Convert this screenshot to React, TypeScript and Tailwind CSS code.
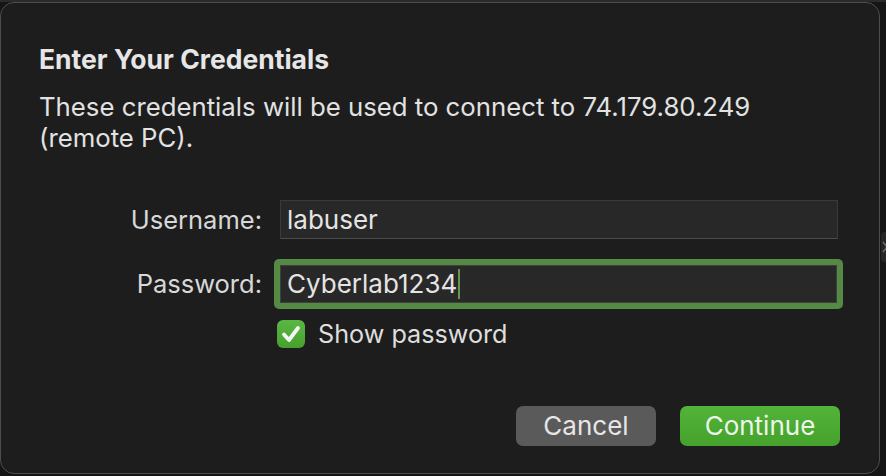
import React from "react";

const CheckIcon = () => (
  <svg viewBox="0 0 28 28" className="h-[28px] w-[28px]">
    <path
      d="M7 14.5 L12 20 L21 8"
      fill="none"
      stroke="#f4f4f4"
      strokeWidth="3.8"
      strokeLinecap="round"
      strokeLinejoin="round"
    />
  </svg>
);

const App = () => {
  return (
    <div className="relative h-[476px] w-[886px] overflow-hidden bg-[#151515] font-['Inter',sans-serif] text-[#dedede]">
      <div className="h-[2px] bg-[#2a2a2a]" />

      {/* edge of a control behind the sheet */}
      <div className="absolute left-[881px] top-[232px] flex h-[30px] w-[12px] items-center rounded-[4px] bg-[#262626]">
        <svg viewBox="0 0 6 12" className="ml-[1px] h-[12px] w-[6px]">
          <path d="M1 1 L5 6 L1 11" fill="none" stroke="#6a6a6a" strokeWidth="1.6" />
        </svg>
      </div>

      <div className="h-[472px] w-[880px] rounded-[14px] border border-[#4d4d4d] bg-[#1d1d1d] pt-[41px]">
        <h1 className="pl-[38px] text-[26.5px] font-bold leading-[30px] text-[#e6e6e6]">
          Enter Your Credentials
        </h1>
        <p className="mt-[17px] pl-[38px] text-[25.75px] leading-[31px] text-[#e2e2e2]">
          These credentials will be used to connect to 74.179.80.249
          <br />
          (remote PC).
        </p>

        <div className="mt-[47px] flex items-center">
          <label className="w-[261px] text-right text-[25.5px] leading-[32px] text-[#d8d8d8]">
            Username:
          </label>
          <div className="ml-[18px] flex h-[39px] w-[558px] items-center border border-[#3a3a3a] border-b-[#4a4a4a] bg-[#282828] pl-[6px] text-[26px] leading-[32px] text-[#e4e4e4]">
            labuser
          </div>
        </div>

        <div className="mt-[20px] flex items-center">
          <label className="w-[261px] text-right text-[25.5px] leading-[32px] text-[#d8d8d8]">
            Password:
          </label>
          <div className="ml-[12px] rounded-[5px] bg-[#558a45] p-[6px]">
            <div className="flex h-[38px] w-[557px] items-center border border-[#3f3f3f] bg-[#282828] pl-[6px] text-[26px] leading-[32px] text-[#e4e4e4]">
              Cyberlab1234
              <span className="ml-[1px] h-[30px] w-[2px] bg-[#5d9a4c]" />
            </div>
          </div>
        </div>

        <div className="ml-[276px] mt-[11px] flex h-[28px] items-center gap-[13px]">
          <div className="flex h-[28px] w-[28px] items-center justify-center rounded-[6px] bg-gradient-to-b from-[#5bb743] to-[#45a02e]">
            <CheckIcon />
          </div>
          <span className="text-[25.2px] leading-[28px] text-[#dedede]">Show password</span>
        </div>

        <div className="mt-[58px] flex justify-end gap-[24px] pr-[39px]">
          <button className="h-[40px] w-[140px] rounded-[7px] bg-[#5a5a5a] text-[26px] leading-[32px] text-[#e6e6e6]">
            Cancel
          </button>
          <button className="h-[40px] w-[160px] rounded-[7px] bg-gradient-to-b from-[#52b339] to-[#45a22c] text-[26px] leading-[32px] text-[#eef5ea]">
            Continue
          </button>
        </div>
      </div>
    </div>
  );
};

export default App;
